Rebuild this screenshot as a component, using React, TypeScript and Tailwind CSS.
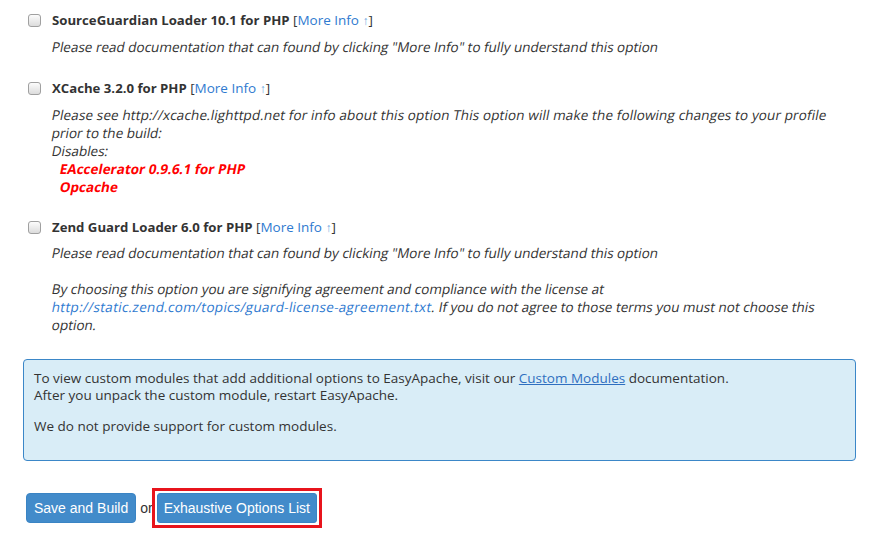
import React from "react";

const Check = () => (
  <span className="mt-[3px] h-[13px] w-[13px] shrink-0 rounded-[3px] border border-[#a0a0a0] bg-gradient-to-b from-[#fcfcfc] to-[#dcdcdc]" />
);

const MoreInfo = () => (
  <span className="font-normal text-[13.5px]">
    [<span className="text-[#2f7ad0]">More Info <span className="text-[12px] text-[#6aa6e0]">↑</span></span>]
  </span>
);

const Line = ({ children, className = "" }: { children: React.ReactNode; className?: string }) => (
  <div className={"-skew-x-[11deg] whitespace-nowrap " + className}>{children}</div>
);

export default function App() {
  return (
    <div className="min-h-[537px] w-[871px] bg-white text-[13.5px] leading-[18px] text-[#333] [font-family:'Open_Sans',sans-serif]">
      <div className="pl-[28px] pr-[16px] pt-[11px]">
        {/* SourceGuardian */}
        <div className="flex gap-[11px]">
          <Check />
          <div>
            <div className="text-[13.2px] font-bold">
              SourceGuardian Loader 10.1 for PHP <MoreInfo />
            </div>
            <div className="mt-[8px]">
              <Line>Please read documentation that can found by clicking "More Info" to fully understand this option</Line>
            </div>
          </div>
        </div>

        {/* XCache */}
        <div className="mt-[23px] flex gap-[11px]">
          <Check />
          <div>
            <div className="text-[13.2px] font-bold">
              XCache 3.2.0 for PHP <MoreInfo />
            </div>
            <div className="mt-[8px]">
              <Line className="tracking-[0.13px]">
                Please see http://xcache.lighttpd.net for info about this option This option will make the following changes to your profile
              </Line>
              <Line>prior to the build:</Line>
              <Line>Disables:</Line>
              <div className="pl-[8px] text-[13.5px] font-bold text-[#ff0000]">
                <Line>EAccelerator 0.9.6.1 for PHP</Line>
                <Line>Opcache</Line>
              </div>
            </div>
          </div>
        </div>

        {/* Zend */}
        <div className="mt-[22px] flex gap-[11px]">
          <Check />
          <div>
            <div className="text-[13.2px] font-bold">
              Zend Guard Loader 6.0 for PHP <MoreInfo />
            </div>
            <div className="mt-[7px]">
              <Line>Please read documentation that can found by clicking "More Info" to fully understand this option</Line>
            </div>
            <div className="mt-[18px]">
              <Line>By choosing this option you are signifying agreement and compliance with the license at</Line>
              <Line>
                <span className="tracking-[0.3px] text-[#2f7ad0]">http://static.zend.com/topics/guard-license-agreement.txt</span>. If you do not agree to those terms you must not choose this
              </Line>
              <Line>option.</Line>
            </div>
          </div>
        </div>
      </div>

      {/* Info box */}
      <div className="ml-[23px] mr-[15px] mt-[25px] h-[102px] rounded-[4px] border border-[#3b87c8] bg-[#d9edf7] px-[10px] pt-[10px] leading-[17px] text-[#333]">
        <div>
          To view custom modules that add additional options to EasyApache, visit our{" "}
          <span className="text-[#2f6fc0] underline">Custom Modules</span> documentation.
        </div>
        <div>After you unpack the custom module, restart EasyApache.</div>
        <div className="mt-[14px]">We do not provide support for custom modules.</div>
      </div>

      {/* Buttons */}
      <div className="ml-[26px] mt-[27px] flex items-center [font-family:'Liberation_Sans',Arial,sans-serif]">
        <button className="h-[30px] rounded-[4px] border border-[#3a84c4] bg-[#428bca] px-[7px] text-[14px] text-white">
          Save and Build
        </button>
        <span className="ml-[4px] text-[14px] text-[#333]">or</span>
        <div className="ml-[-1px] border-[3px] border-[#e8141c] p-[2px]">
          <button className="h-[30px] rounded-[3px] border border-[#3a84c4] bg-[#428bca] px-[6px] text-[14px] text-white">
            Exhaustive Options List
          </button>
        </div>
      </div>
    </div>
  );
}
